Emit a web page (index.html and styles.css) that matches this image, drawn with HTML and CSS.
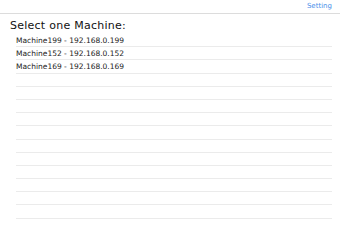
FILE: index.html
```html
<!DOCTYPE html>
<html>
<head>
<meta charset="utf-8">
<link rel="stylesheet" href="styles.css">
</head>
<body>
<header class="navbar">
  <a class="nav-link" href="#">Setting</a>
</header>
<h1 class="title">Select one Machine:</h1>
<ul class="machine-list">
  <li class="row">Machine199 - 192.168.0.199</li>
  <li class="row">Machine152 - 192.168.0.152</li>
  <li class="row">Machine169 - 192.168.0.169</li>
  <li class="row"></li>
  <li class="row"></li>
  <li class="row"></li>
  <li class="row"></li>
  <li class="row"></li>
  <li class="row"></li>
  <li class="row"></li>
  <li class="row"></li>
  <li class="row"></li>
  <li class="row"></li>
  <li class="row"></li>
</ul>
</body>
</html>
```
FILE: styles.css
```css
html, body {
  margin: 0;
  padding: 0;
  background: #ffffff;
  font-family: "DejaVu Sans", "Liberation Sans", sans-serif;
  color: #111;
}

.navbar {
  height: 13px;
  border-bottom: 1px solid #dcdcdc;
  display: flex;
  justify-content: flex-end;
  align-items: center;
  padding-right: 8px;
  box-sizing: content-box;
}

.nav-link {
  font-size: 7px;
  color: #4a90ea;
  text-decoration: none;
  line-height: 13px;
}

.title {
  margin: 0;
  padding: 3px 0 0 10px;
  height: 17px;
  line-height: 17px;
  font-size: 11px;
  font-weight: normal;
  letter-spacing: 0.25px;
  color: #111;
}

.machine-list {
  list-style: none;
  margin: 0 8px 0 16px;
  padding: 0;
}

.row {
  box-sizing: border-box;
  height: 13.2px;
  border-bottom: 1px solid #ebebeb;
  font-size: 7.5px;
  line-height: 13px;
  color: #222;
  white-space: nowrap;
}
```
